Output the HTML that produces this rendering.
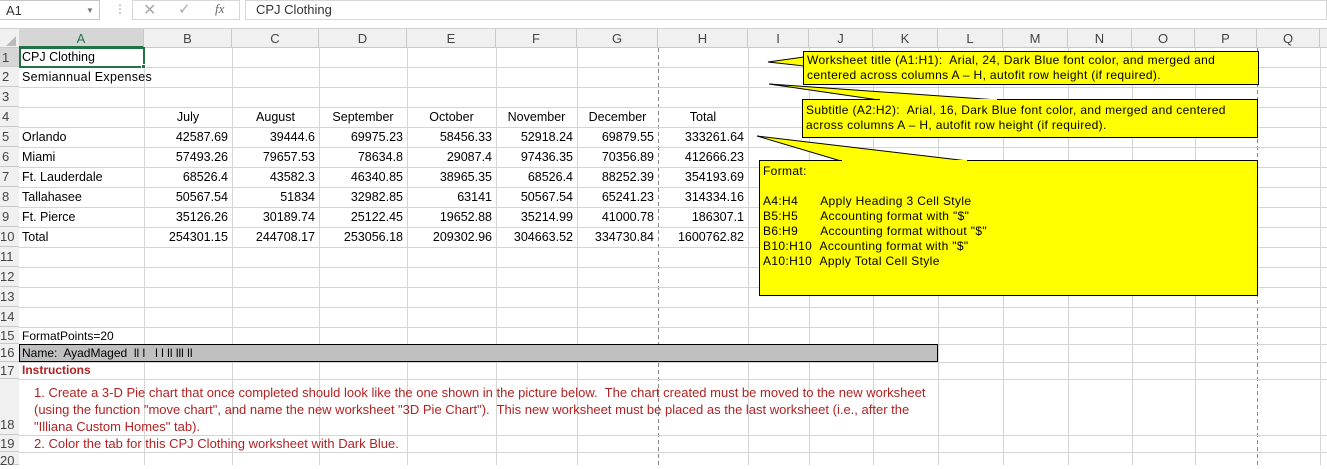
<!DOCTYPE html>
<html><head><meta charset="utf-8"><style>
*{margin:0;padding:0;box-sizing:border-box}
body{width:1327px;height:465px;overflow:hidden;background:#fff;font-family:"Liberation Sans",sans-serif;position:relative;color:#000}
.a{position:absolute;white-space:nowrap}
.vl{position:absolute;top:48px;height:417px;width:1px;background:#d4d4d4}
.hl{position:absolute;left:19px;width:1308px;height:1px;background:#d4d4d4}
.ch{position:absolute;top:29px;height:19px;font-size:13px;color:#444;text-align:center;line-height:20px;border-right:1px solid #c8c8c8}
.rh{position:absolute;left:0;width:19px;font-size:13px;color:#444;padding-left:2px;background:#f0f0f0;border-bottom:1px solid #c8c8c8}
.c{position:absolute;font-size:12.5px;line-height:20px;white-space:nowrap}
.n{text-align:right;padding-right:4px}
.t{text-align:center}
.bx{position:absolute;background:#ffff00;border:1px solid #000;font-size:12px;line-height:15px;padding:1px 3px;letter-spacing:0.35px;white-space:normal}
</style></head><body>
<div class="a" style="left:0;top:0;width:1327px;height:29px;background:#fff;border-bottom:1px solid #d0d0d0"></div>
<div class="a" style="left:0;top:0;width:100px;height:20px;border:1px solid #c6c6c6;border-left:none;font-size:13px;padding:2px 6px;color:#333">A1</div>
<div class="a" style="left:86px;top:6px;font-size:8px;color:#777">▼</div>
<div class="a" style="left:114px;top:2px;font-size:12px;color:#999">⋮</div>
<div class="a" style="left:132px;top:0;width:108px;height:20px;border:1px solid #d6d6d6"></div>
<div class="a" style="left:143px;top:0px;font-size:16px;color:#aaa">✕</div>
<div class="a" style="left:178px;top:0px;font-size:15px;color:#aaa">✓</div>
<div class="a" style="left:215px;top:1px;font-size:13px;font-style:italic;font-family:'Liberation Serif',serif;color:#666">fx</div>
<div class="a" style="left:245px;top:0;width:1082px;height:20px;border:1px solid #d6d6d6;font-size:13px;padding:1px 10px;color:#333">CPJ Clothing</div>
<div class="a" style="left:0;top:29px;width:1327px;height:19px;background:#f0f0f0;border-bottom:1px solid #c8c8c8"></div>
<div class="a" style="left:6px;top:36px;width:0;height:0;border-left:10px solid transparent;border-bottom:10px solid #bbb"></div>
<div class="ch" style="left:19px;width:125px;background:#d6d6d6;border-bottom:2px solid #217346;color:#217346">A</div>
<div class="ch" style="left:144px;width:88px">B</div>
<div class="ch" style="left:232px;width:87px">C</div>
<div class="ch" style="left:319px;width:88px">D</div>
<div class="ch" style="left:407px;width:89px">E</div>
<div class="ch" style="left:496px;width:81px">F</div>
<div class="ch" style="left:577px;width:81px">G</div>
<div class="ch" style="left:658px;width:90px">H</div>
<div class="ch" style="left:748px;width:61px">I</div>
<div class="ch" style="left:809px;width:64px">J</div>
<div class="ch" style="left:873px;width:65px">K</div>
<div class="ch" style="left:938px;width:65px">L</div>
<div class="ch" style="left:1003px;width:65px">M</div>
<div class="ch" style="left:1068px;width:64px">N</div>
<div class="ch" style="left:1132px;width:63px">O</div>
<div class="ch" style="left:1195px;width:62px">P</div>
<div class="ch" style="left:1257px;width:63px">Q</div>
<div class="vl" style="left:144px"></div><div class="vl" style="left:232px"></div><div class="vl" style="left:319px"></div><div class="vl" style="left:407px"></div><div class="vl" style="left:496px"></div><div class="vl" style="left:577px"></div>
<div class="vl" style="left:658px;background:repeating-linear-gradient(#888 0 4px,#fff 4px 7px)"></div>
<div class="vl" style="left:748px"></div><div class="vl" style="left:809px"></div><div class="vl" style="left:873px"></div><div class="vl" style="left:938px"></div><div class="vl" style="left:1003px"></div><div class="vl" style="left:1068px"></div><div class="vl" style="left:1132px"></div><div class="vl" style="left:1195px"></div>
<div class="vl" style="left:1257px;background:repeating-linear-gradient(#888 0 4px,#fff 4px 7px)"></div>
<div class="vl" style="left:1320px"></div>
<div class="hl" style="top:67px"></div><div class="hl" style="top:87px"></div><div class="hl" style="top:107px"></div><div class="hl" style="top:127px"></div><div class="hl" style="top:147px"></div><div class="hl" style="top:167px"></div><div class="hl" style="top:187px"></div><div class="hl" style="top:207px"></div><div class="hl" style="top:227px"></div><div class="hl" style="top:247px"></div><div class="hl" style="top:267px"></div><div class="hl" style="top:287px"></div><div class="hl" style="top:307px"></div><div class="hl" style="top:327px"></div><div class="hl" style="top:344px"></div><div class="hl" style="top:362px"></div><div class="hl" style="top:379px"></div><div class="hl" style="top:435px"></div><div class="hl" style="top:452px"></div>
<div class="a" style="left:0;top:48px;width:19px;height:417px;background:#f0f0f0;border-right:1px solid #c8c8c8"></div>
<div class="rh" style="top:48px;height:19px;line-height:19px;background:#d6d6d6">1</div>
<div class="rh" style="top:67px;height:20px;line-height:20px">2</div>
<div class="rh" style="top:87px;height:20px;line-height:20px">3</div>
<div class="rh" style="top:107px;height:20px;line-height:20px">4</div>
<div class="rh" style="top:127px;height:20px;line-height:20px">5</div>
<div class="rh" style="top:147px;height:20px;line-height:20px">6</div>
<div class="rh" style="top:167px;height:20px;line-height:20px">7</div>
<div class="rh" style="top:187px;height:20px;line-height:20px">8</div>
<div class="rh" style="top:207px;height:20px;line-height:20px">9</div>
<div class="rh" style="top:227px;height:20px;line-height:20px;padding-left:0">10</div>
<div class="rh" style="top:247px;height:20px;line-height:20px;padding-left:0">11</div>
<div class="rh" style="top:267px;height:20px;line-height:20px;padding-left:0">12</div>
<div class="rh" style="top:287px;height:20px;line-height:20px;padding-left:0">13</div>
<div class="rh" style="top:307px;height:20px;line-height:20px;padding-left:0">14</div>
<div class="rh" style="top:327px;height:17px;line-height:17px;padding-left:0">15</div>
<div class="rh" style="top:344px;height:18px;line-height:18px;padding-left:0">16</div>
<div class="rh" style="top:362px;height:17px;line-height:17px;padding-left:0">17</div>
<div class="rh" style="top:379px;height:56px;line-height:17px;padding-left:0;padding-top:37px">18</div>
<div class="rh" style="top:435px;height:17px;line-height:17px;padding-left:0">19</div>
<div class="rh" style="top:452px;height:13px;line-height:17px;padding-left:0">20</div>
<div class="a" style="left:19px;top:47px;width:126px;height:21px;border:2px solid #217346"></div>
<div class="a" style="left:141px;top:64px;width:5px;height:5px;background:#217346;border:1px solid #fff"></div>
<div class="c" style="left:22px;top:47px">CPJ Clothing</div>
<div class="c" style="left:22px;top:67px;letter-spacing:0.3px">Semiannual Expenses</div>
<div class="c t" style="left:144px;width:88px;top:107px">July</div>
<div class="c t" style="left:232px;width:87px;top:107px">August</div>
<div class="c t" style="left:319px;width:88px;top:107px">September</div>
<div class="c t" style="left:407px;width:89px;top:107px">October</div>
<div class="c t" style="left:496px;width:81px;top:107px">November</div>
<div class="c t" style="left:577px;width:81px;top:107px">December</div>
<div class="c t" style="left:658px;width:90px;top:107px">Total</div>
<div class="c" style="left:22px;top:127px">Orlando</div>
<div class="c" style="left:22px;top:147px">Miami</div>
<div class="c" style="left:22px;top:167px">Ft. Lauderdale</div>
<div class="c" style="left:22px;top:187px">Tallahasee</div>
<div class="c" style="left:22px;top:207px">Ft. Pierce</div>
<div class="c" style="left:22px;top:227px">Total</div>
<div class="c n" style="left:144px;width:88px;top:127px">42587.69</div>
<div class="c n" style="left:232px;width:87px;top:127px">39444.6</div>
<div class="c n" style="left:319px;width:88px;top:127px">69975.23</div>
<div class="c n" style="left:407px;width:89px;top:127px">58456.33</div>
<div class="c n" style="left:496px;width:81px;top:127px">52918.24</div>
<div class="c n" style="left:577px;width:81px;top:127px">69879.55</div>
<div class="c n" style="left:658px;width:90px;top:127px">333261.64</div>
<div class="c n" style="left:144px;width:88px;top:147px">57493.26</div>
<div class="c n" style="left:232px;width:87px;top:147px">79657.53</div>
<div class="c n" style="left:319px;width:88px;top:147px">78634.8</div>
<div class="c n" style="left:407px;width:89px;top:147px">29087.4</div>
<div class="c n" style="left:496px;width:81px;top:147px">97436.35</div>
<div class="c n" style="left:577px;width:81px;top:147px">70356.89</div>
<div class="c n" style="left:658px;width:90px;top:147px">412666.23</div>
<div class="c n" style="left:144px;width:88px;top:167px">68526.4</div>
<div class="c n" style="left:232px;width:87px;top:167px">43582.3</div>
<div class="c n" style="left:319px;width:88px;top:167px">46340.85</div>
<div class="c n" style="left:407px;width:89px;top:167px">38965.35</div>
<div class="c n" style="left:496px;width:81px;top:167px">68526.4</div>
<div class="c n" style="left:577px;width:81px;top:167px">88252.39</div>
<div class="c n" style="left:658px;width:90px;top:167px">354193.69</div>
<div class="c n" style="left:144px;width:88px;top:187px">50567.54</div>
<div class="c n" style="left:232px;width:87px;top:187px">51834</div>
<div class="c n" style="left:319px;width:88px;top:187px">32982.85</div>
<div class="c n" style="left:407px;width:89px;top:187px">63141</div>
<div class="c n" style="left:496px;width:81px;top:187px">50567.54</div>
<div class="c n" style="left:577px;width:81px;top:187px">65241.23</div>
<div class="c n" style="left:658px;width:90px;top:187px">314334.16</div>
<div class="c n" style="left:144px;width:88px;top:207px">35126.26</div>
<div class="c n" style="left:232px;width:87px;top:207px">30189.74</div>
<div class="c n" style="left:319px;width:88px;top:207px">25122.45</div>
<div class="c n" style="left:407px;width:89px;top:207px">19652.88</div>
<div class="c n" style="left:496px;width:81px;top:207px">35214.99</div>
<div class="c n" style="left:577px;width:81px;top:207px">41000.78</div>
<div class="c n" style="left:658px;width:90px;top:207px">186307.1</div>
<div class="c n" style="left:144px;width:88px;top:227px">254301.15</div>
<div class="c n" style="left:232px;width:87px;top:227px">244708.17</div>
<div class="c n" style="left:319px;width:88px;top:227px">253056.18</div>
<div class="c n" style="left:407px;width:89px;top:227px">209302.96</div>
<div class="c n" style="left:496px;width:81px;top:227px">304663.52</div>
<div class="c n" style="left:577px;width:81px;top:227px">334730.84</div>
<div class="c n" style="left:658px;width:90px;top:227px">1600762.82</div>
<div class="c" style="left:22px;top:327px;line-height:18px;font-size:12px">FormatPoints=20</div>
<div class="a" style="left:19px;top:344px;width:919px;height:18px;background:#c0c0c0;border:1px solid #000"></div>
<div class="c" style="left:22px;top:344px;line-height:18px;font-size:12px">Name:&nbsp; AyadMaged&nbsp; ll l&nbsp;&nbsp; l l ll lll ll</div>
<div class="c" style="left:22px;top:362px;line-height:17px;font-size:12px;font-weight:bold;color:#b22222">Instructions</div>
<div class="c" style="left:34px;top:384px;line-height:17px;font-size:13px;color:#b22222">1. Create a 3-D Pie chart that once completed should look like the one shown in the picture below.&nbsp; The chart created must be moved to the new worksheet<br>(using the function "move chart", and name the new worksheet "3D Pie Chart").&nbsp; This new worksheet must be placed as the last worksheet (i.e., after the<br>"Illiana Custom Homes" tab).</div>
<div class="c" style="left:34px;top:435px;line-height:17px;font-size:13px;color:#b22222">2. Color the tab for this CPJ Clothing worksheet with Dark Blue.</div>
<svg class="a" style="left:0;top:0" width="1327" height="465">
<polygon points="804,57 768,62 804,66" fill="#ffff00" stroke="#000" stroke-width="1"/>
<polygon points="879,100 769,84 998,100" fill="#ffff00" stroke="#000" stroke-width="1"/>
<polygon points="841,161 757,136 968,161" fill="#ffff00" stroke="#000" stroke-width="1"/>
</svg>
<div class="bx" style="left:803px;top:51px;width:456px;height:34px">Worksheet title (A1:H1):&nbsp; Arial, 24, Dark Blue font color, and merged and centered across columns A – H, autofit row height (if required).</div>
<div class="bx" style="left:802px;top:99px;width:456px;height:39px;padding-top:3px">Subtitle (A2:H2):&nbsp; Arial, 16, Dark Blue font color, and merged and centered across columns A – H, autofit row height (if required).</div>
<div class="bx" style="left:759px;top:160px;width:499px;height:136px;padding-top:3px;white-space:nowrap">Format:<br><br>A4:H4&nbsp;&nbsp;&nbsp;&nbsp;&nbsp;&nbsp;Apply Heading 3 Cell Style<br>B5:H5&nbsp;&nbsp;&nbsp;&nbsp;&nbsp;&nbsp;Accounting format with "$"<br>B6:H9&nbsp;&nbsp;&nbsp;&nbsp;&nbsp;&nbsp;Accounting format without "$"<br>B10:H10&nbsp;&nbsp;Accounting format with "$"<br>A10:H10&nbsp;&nbsp;Apply Total Cell Style</div>
<div class="a" style="left:804px;top:58px;width:2px;height:8px;background:#ffff00"></div>
<div class="a" style="left:880px;top:99px;width:117px;height:2px;background:#ffff00"></div>
<div class="a" style="left:842px;top:160px;width:125px;height:2px;background:#ffff00"></div>
</body></html>
